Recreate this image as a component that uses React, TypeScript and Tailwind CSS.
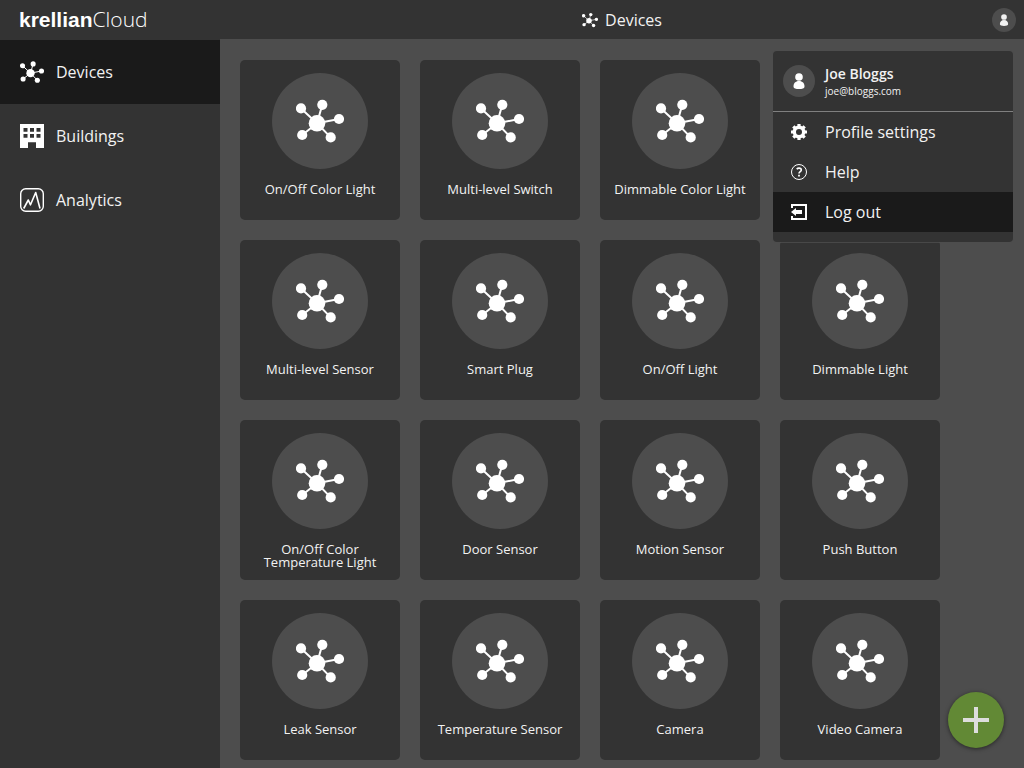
import React, { useState } from 'react';

// An empty name is a device that has not been named yet
const DEVICES = [
  'On/Off Color Light',
  'Multi-level Switch',
  'Dimmable Color Light',
  '',
  'Multi-level Sensor',
  'Smart Plug',
  'On/Off Light',
  'Dimmable Light',
  'On/Off Color Temperature Light',
  'Door Sensor',
  'Motion Sensor',
  'Push Button',
  'Leak Sensor',
  'Temperature Sensor',
  'Camera',
  'Video Camera',
];

interface IconProps {
  className?: string;
}

const DeviceIcon: React.FC<IconProps> = ({ className }) => (
  <svg viewBox="0 0 48 48" className={className} fill="currentColor" aria-hidden="true">
    <path
      d="M21 26.3 5 11.4M21 26.3 26.3 7.8M21 26.3 43 22M21 26.3 6.2 38M21 26.3 34.7 40.4"
      stroke="currentColor"
      strokeWidth="2"
    />
    <circle cx="21" cy="26.3" r="8.3" />
    <circle cx="5" cy="11.4" r="5.1" />
    <circle cx="26.3" cy="7.8" r="5.1" />
    <circle cx="43" cy="22" r="5.1" />
    <circle cx="6.2" cy="38" r="5.1" />
    <circle cx="34.7" cy="40.4" r="5.1" />
  </svg>
);

const BuildingIcon: React.FC<IconProps> = ({ className }) => (
  <svg viewBox="0 0 24 24" className={className} fill="currentColor" aria-hidden="true">
    <path
      fillRule="evenodd"
      d="M0 0h24v24h-8v-5.7H8V24H0zM3.5 4v3.8h4V4zM10 4v3.8h4V4zM16.5 4v3.8h4V4zM3.5 10v3.8h4V10zM10 10v3.8h4V10zM16.5 10v3.8h4V10z"
    />
  </svg>
);

const AnalyticsIcon: React.FC<IconProps> = ({ className }) => (
  <svg viewBox="0 0 24 24" className={className} fill="none" stroke="currentColor" aria-hidden="true">
    <rect x="0.7" y="0.7" width="22.6" height="22.6" rx="5" strokeWidth="1.4" />
    <path d="M3.7 20.5 8.3 12l2.2 4.8L15.7 4.5 20 20.5" strokeWidth="1.6" strokeLinejoin="round" />
  </svg>
);

const UserIcon: React.FC<IconProps> = ({ className }) => (
  <svg viewBox="0 0 16 16" className={className} fill="currentColor" aria-hidden="true">
    <circle cx="8" cy="4" r="3.8" />
    <path d="M2.5 13.4C2.5 10.4 4.4 8.1 8 8.1s5.5 2.3 5.5 5.3C13.5 15.4 11 16 8 16s-5.5-.6-5.5-2.6z" />
  </svg>
);

const SettingsIcon: React.FC<IconProps> = ({ className }) => (
  <svg viewBox="0 0 16 16" className={className} fill="none" stroke="currentColor" aria-hidden="true">
    <circle cx="8" cy="8" r="4.7" strokeWidth="3.4" />
    <path
      d="M8 0v3M8 13v3M0 8h3M13 8h3M2.3 2.3l2.2 2.2M11.5 11.5l2.2 2.2M2.3 13.7l2.2-2.2M11.5 4.5l2.2-2.2"
      strokeWidth="3.2"
    />
  </svg>
);

const HelpIcon: React.FC<IconProps> = ({ className }) => (
  <svg viewBox="0 0 16 16" className={className} fill="none" stroke="currentColor" aria-hidden="true">
    <circle cx="8" cy="8" r="7.5" />
    <path d="M5.7 5.1C6.3 4.5 7.1 4.1 8 4.1c1.4 0 2.3.7 2.3 1.9C10.3 7.7 8 7.7 8 9.6" strokeWidth="1.6" />
    <path d="M8 10.8v1.8" strokeWidth="1.8" />
  </svg>
);

const LogoutIcon: React.FC<IconProps> = ({ className }) => (
  <svg viewBox="0 0 16 16" className={className} fill="currentColor" aria-hidden="true">
    <path d="M0 0h16v16H0v-4h2v2h12V2H2v2H0z" />
    <path d="M0 8l5-4v2h6v4H5v2z" />
  </svg>
);

const NAV_ITEMS = [
  { label: 'Devices', Icon: DeviceIcon },
  { label: 'Buildings', Icon: BuildingIcon },
  { label: 'Analytics', Icon: AnalyticsIcon },
];

const MENU_ITEMS = [
  { label: 'Profile settings', Icon: SettingsIcon },
  { label: 'Help', Icon: HelpIcon },
  { label: 'Log out', Icon: LogoutIcon },
];

const Header: React.FC<{ onToggleMenu: () => void }> = ({ onToggleMenu }) => (
  <header className="flex h-[39px] items-center bg-[#333] pt-px pr-2">
    <a href="#home" className="flex w-[220px] items-baseline pb-[2px] pl-[19px] text-[21px] leading-6 text-white">
      <span className="font-['Liberation_Sans',sans-serif] font-bold">krellian</span>
      <span className="font-light">Cloud</span>
    </a>
    <h1 className="flex flex-1 items-center justify-center gap-[7px] pl-8 text-base">
      <DeviceIcon className="size-4 text-white" />
      Devices
    </h1>
    <button
      type="button"
      aria-label="Account"
      className="flex size-6 items-center justify-center rounded-full bg-[#4d4d4d]"
      onClick={onToggleMenu}
    >
      <UserIcon className="size-3" />
    </button>
  </header>
);

const Sidebar: React.FC = () => (
  <nav className="w-[220px] shrink-0 bg-[#333] pt-px">
    {NAV_ITEMS.map(({ label, Icon }) => (
      <a
        key={label}
        href={`#${label.toLowerCase()}`}
        className={`flex h-16 items-center gap-3 px-5 ${label === 'Devices' ? 'bg-[#1a1a1a]' : ''}`}
      >
        <Icon className="size-6 text-white" />
        {label}
      </a>
    ))}
  </nav>
);

const DeviceCard: React.FC<{ name: string }> = ({ name }) => (
  <a
    href="#device"
    className="flex h-40 flex-col items-center rounded-[5px] bg-[#333] px-2 pt-[13px] text-center text-[13px] leading-[13px]"
  >
    <span className="mb-[14px] flex size-24 shrink-0 items-center justify-center rounded-full bg-[#4d4d4d]">
      <DeviceIcon className="size-12 text-white" />
    </span>
    {name}
  </a>
);

const UserMenu: React.FC = () => (
  <div className="absolute top-[51px] right-[11px] w-60 rounded-[4px] bg-[#333] pb-[10px] shadow-[0_0_0_1px_rgba(77,77,77,0.8)]">
    <div className="flex h-[61px] items-center gap-[10px] border-b border-[#808080] px-[10px]">
      <span className="flex size-8 items-center justify-center rounded-full bg-[#4d4d4d]">
        <UserIcon className="size-4 text-white" />
      </span>
      <div className="pt-[2px]">
        <div className="text-[14px] leading-[18px] font-semibold">Joe Bloggs</div>
        <div className="text-[10px] leading-4">joe@bloggs.com</div>
      </div>
    </div>
    {MENU_ITEMS.map(({ label, Icon }) => (
      <button
        key={label}
        type="button"
        className={`flex h-10 w-full items-center gap-[18px] px-[18px] text-base ${
          label === 'Log out' ? 'bg-[#1a1a1a]' : ''
        }`}
      >
        <Icon className="size-4 text-white" />
        {label}
      </button>
    ))}
  </div>
);

const App: React.FC = () => {
  const [menuOpen, setMenuOpen] = useState(true);

  return (
    <div className="relative flex min-h-screen flex-col bg-[#4d4d4d] font-['Open_Sans',sans-serif] text-base text-[#f2f2f2]">
      <Header onToggleMenu={() => setMenuOpen(!menuOpen)} />
      <div className="flex flex-1">
        <Sidebar />
        <main className="grid flex-1 grid-cols-[repeat(auto-fill,160px)] content-start gap-5 px-5 pt-[21px] pb-2">
          {DEVICES.map((name, i) => (
            <DeviceCard key={i} name={name} />
          ))}
        </main>
      </div>

      {menuOpen && <UserMenu />}

      <button
        type="button"
        aria-label="Add device"
        className="fixed right-5 bottom-5 flex size-14 items-center justify-center rounded-full bg-[#628935] text-[#ddd] shadow-[0_1px_4px_rgba(0,0,0,0.5)]"
      >
        <svg viewBox="0 0 26 26" className="size-[26px]" fill="currentColor" aria-hidden="true">
          <path d="M11 0h4v11h11v4H15v11h-4V15H0v-4h11z" />
        </svg>
      </button>
    </div>
  );
};

export default App;
